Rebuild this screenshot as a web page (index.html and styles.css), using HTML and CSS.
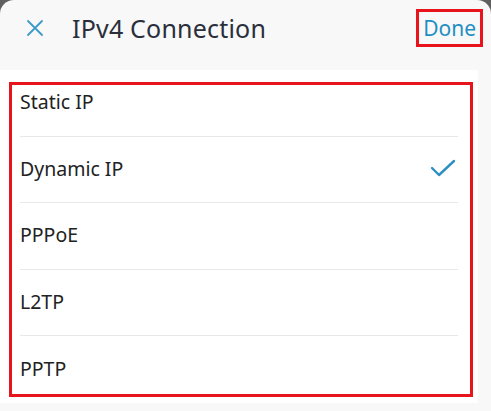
FILE: index.html
```html
<!DOCTYPE html>
<html>
<head>
<meta charset="utf-8">
<link rel="stylesheet" href="styles.css">
</head>
<body>
<div class="sheet">
  <div class="header">
    <svg class="close" width="18" height="18" viewBox="0 0 18 18"><path d="M2 2L16 16M16 2L2 16" stroke="#3a9bc9" stroke-width="1.8" fill="none" stroke-linecap="round"/></svg>
    <div class="title">IPv4 Connection</div>
    <div class="done">Done<span class="mark mark-done"></span></div>
  </div>
  <div class="card">
    <div class="list">
      <div class="row"><span>Static IP</span></div>
      <div class="row"><span>Dynamic IP</span>
        <svg class="check" width="26" height="20" viewBox="0 0 26 20"><path d="M2 10L9 17L24 3" stroke="#2e8fc2" stroke-width="2.4" fill="none" stroke-linecap="round" stroke-linejoin="round"/></svg>
      </div>
      <div class="row"><span>PPPoE</span></div>
      <div class="row"><span>L2TP</span></div>
      <div class="row last"><span>PPTP</span></div>
    </div>
    <span class="mark mark-list"></span>
  </div>
</div>
</body>
</html>
```
FILE: styles.css
```css
html, body {
  margin: 0;
  padding: 0;
}
body {
  background: #5f5f5f;
  width: 491px;
  height: 411px;
  overflow: hidden;
  font-family: "Noto Sans", "Liberation Sans", sans-serif;
}
.sheet {
  background: #f8f8f8;
  border-radius: 14px 14px 0 0;
  height: 411px;
  position: relative;
}
.header {
  height: 70px;
  display: flex;
  align-items: center;
  padding: 0 0 0 26px;
  box-sizing: border-box;
  padding-bottom: 14px;
}
.close {
  flex: none;
}
.title {
  margin-left: 28px;
  font-size: 25px;
  color: #2a2f3b;
  flex: 1;
  letter-spacing: 0.2px;
}
.done {
  position: relative;
  font-size: 21px;
  color: #1f8fc3;
  margin-right: 14px;
  padding: 0 1px;
}
.card {
  background: #ffffff;
  width: 478px;
  height: 333px;
  position: relative;
}
.list {
  padding: 0 20px;
}
.row {
  height: 66.5px;
  display: flex;
  align-items: center;
  justify-content: space-between;
  border-bottom: 1px solid #e8e8e8;
  box-sizing: border-box;
  font-size: 19.5px;
  color: #222222;
  padding-bottom: 2px;
}
.row.last {
  border-bottom: none;
}
.check {
  margin-right: 2px;
}
.mark {
  position: absolute;
  border: 3px solid #e8141c;
  box-sizing: border-box;
  pointer-events: none;
}
.mark-done {
  left: -6px;
  right: -6px;
  top: -5px;
  bottom: -5px;
}
.mark-list {
  left: 9px;
  top: 12px;
  width: 464px;
  height: 315px;
}
```
